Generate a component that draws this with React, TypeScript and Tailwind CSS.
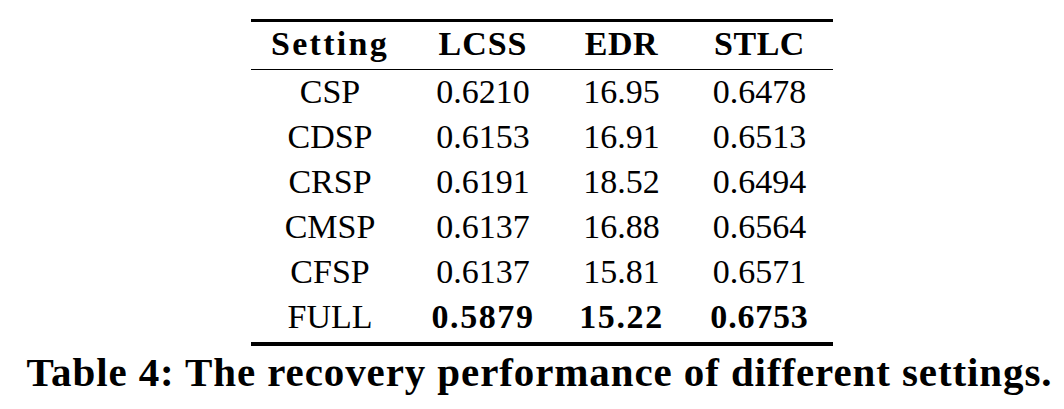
import React from "react";

const rows: [string, string, string, string][] = [
  ["CSP", "0.6210", "16.95", "0.6478"],
  ["CDSP", "0.6153", "16.91", "0.6513"],
  ["CRSP", "0.6191", "18.52", "0.6494"],
  ["CMSP", "0.6137", "16.88", "0.6564"],
  ["CFSP", "0.6137", "15.81", "0.6571"],
];

const cols = "grid grid-cols-[158px_148px_129px_147px] text-center";

export default function App() {
  return (
    <div className="w-[1064px] h-[409px] bg-white text-black overflow-hidden font-['Liberation_Serif','Times_New_Roman',serif]">
      <div className="pt-[19px] pl-[251px] w-[833px]">
        <div className="w-[582px] h-[3px] bg-black" />
        <div className={`${cols} h-[47px] pt-[1px] text-[34px] leading-[41px] font-bold`}>
          <div className="tracking-[2.3px]">Setting</div>
          <div className="tracking-[1px]">LCSS</div>
          <div className="tracking-[0.5px]">EDR</div>
          <div className="tracking-[0.5px]">STLC</div>
        </div>
        <div className="w-[582px] h-[1px] bg-black" />
        {rows.map((r) => (
          <div key={r[0]} className={`${cols} h-[45px] pt-[1px] text-[34px] leading-[41px]`}>
            <div>{r[0]}</div>
            <div>{r[1]}</div>
            <div>{r[2]}</div>
            <div>{r[3]}</div>
          </div>
        ))}
        <div className={`${cols} h-[45px] pt-[1px] text-[34px] leading-[41px]`}>
          <div>FULL</div>
          <div className="font-bold tracking-[1.6px]">0.5879</div>
          <div className="font-bold tracking-[1.6px]">15.22</div>
          <div className="font-bold tracking-[0.8px]">0.6753</div>
        </div>
        <div className="mt-[2px] w-[582px] h-[4px] bg-black" />
      </div>
      <div className="mt-[2px] pl-[15px] text-center text-[41px] leading-[48px] font-bold tracking-[0.9px] whitespace-nowrap">
        Table 4: The recovery performance of different settings.
      </div>
    </div>
  );
}
